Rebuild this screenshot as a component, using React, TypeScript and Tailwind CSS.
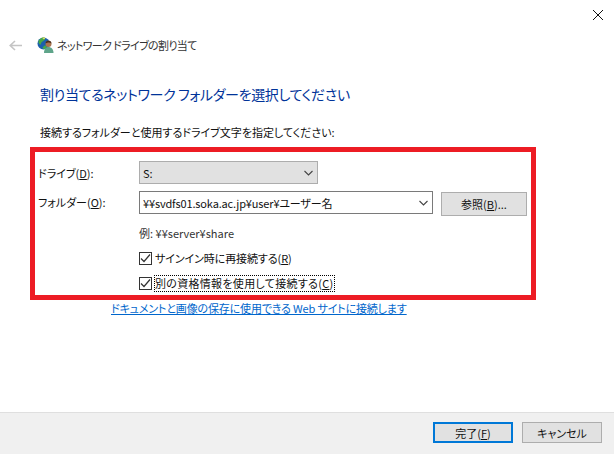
import React from "react";

const Chevron = () => (
  <svg width="9" height="6" viewBox="0 0 9 6" fill="none" stroke="#444" strokeWidth="1.1">
    <path d="M0.5 1l4 4 4-4" />
  </svg>
);

const Check = () => (
  <span className="w-[13px] h-[13px] border border-[#333] bg-white flex items-center justify-center shrink-0">
    <svg width="11" height="11" viewBox="0 0 11 11" fill="none" stroke="#333" strokeWidth="1.2">
      <path d="M1 5.5l3 3 6-7" />
    </svg>
  </span>
);

export default function App() {
  return (
    <div className="w-[614px] h-[454px] bg-white flex flex-col overflow-hidden text-[11px] leading-[16px] text-[#111] font-['Noto_Sans_CJK_JP','Noto_Sans',sans-serif] [font-feature-settings:'palt']">
      <div className="h-[30px] flex items-start justify-end pt-[10px] pr-[11px] shrink-0">
        <svg width="10" height="10" viewBox="0 0 10 10" stroke="#111" strokeWidth="1">
          <path d="M0 0l10 10M10 0L0 10" />
        </svg>
      </div>

      <div className="h-[30px] flex items-center pl-[9px] shrink-0">
        <svg width="13" height="11" viewBox="0 0 13 11" fill="none" stroke="#c4c4c4" strokeWidth="1.6">
          <path d="M6 1L1.2 5.5 6 10M1.2 5.5H13" />
        </svg>
        <svg className="ml-[15px]" width="17" height="18" viewBox="0 0 17 18">
          <circle cx="6.500" cy="7.500" r="6" fill="#1c5fae" />
          <path d="M2 4c2-2 4-3.500 5.500-2.500S7.500 4.500 5.500 5.500 4.500 9 3 8.500 1 5 2 4zM7 10c2-1 3 0 2.500 1.500S7 13.500 6 12.500 6 11 7 10z" fill="#45a848" />
          <path d="M5 1.800c1-.3 2.500-.3 3.500.2L7 3.500z" fill="#e8e070" />
          <circle cx="11.500" cy="8" r="3" fill="#a9744f" />
          <path d="M8.500 7.500c0-2 1.500-3 3-3s3 1 3 3c-1-1-2.500-1.300-3.500-1s-2 .5-2.500 1z" fill="#4a2f1c" />
          <path d="M7 17c0-4 2-6 4.500-6s5 2 5 6z" fill="#5fa58a" />
        </svg>
        <span className="ml-[3px] text-[#333] tracking-[-0.65px]">ネットワーク ドライブの割り当て</span>
      </div>

      <div className="pl-[40px] mt-[23px] text-[14px] leading-[22px] tracking-[-0.35px] text-[#003399] shrink-0">
        割り当てるネットワーク フォルダーを選択してください
      </div>

      <div className="pl-[40px] mt-[19px] shrink-0">接続するフォルダーと使用するドライブ文字を指定してください:</div>

      <div className="ml-[30px] mt-[7px] w-[506px] h-[153px] border-[5px] border-[#ed1c24] shrink-0 pt-[9px] pl-[3px]">
        <div className="flex items-center h-[23px]">
          <span className="w-[101px]">ドライブ(<u>D</u>):</span>
          <div className="w-[179px] h-[23px] border border-[#adadad] bg-[#e1e1e1] flex items-center justify-between pl-[3px] pr-[4px]">
            <span>S:</span>
            <Chevron />
          </div>
        </div>

        <div className="flex items-center h-[25px] mt-[7px]">
          <span className="w-[101px] self-start pt-[3px]">フォルダー(<u>O</u>):</span>
          <div className="w-[294px] h-[23px] self-start border border-[#7a7a7a] bg-white flex items-center justify-between pl-[3px] pr-[4px]">
            <span className="tracking-[-0.15px]">¥¥svdfs01.soka.ac.jp¥user¥ユーザー名</span>
            <Chevron />
          </div>
          <div className="ml-[8px] w-[86px] h-[24px] self-end border border-[#adadad] bg-[#e1e1e1] flex items-center justify-center">
            参照(<u>B</u>)...
          </div>
        </div>

        <div className="ml-[101px] mt-[9px] text-[#333]">例: ¥¥server¥share</div>

        <div className="ml-[101px] mt-[9px] flex items-center gap-[3px] h-[16px]">
          <Check />
          <span className="tracking-[-0.1px]">サインイン時に再接続する(<u>R</u>)</span>
        </div>

        <div className="ml-[101px] mt-[9px] flex items-center gap-[2px] h-[17px]">
          <Check />
          <span className="border border-dotted border-black leading-[15px] tracking-[0.3px]">別の資格情報を使用して接続する(<u>C</u>)</span>
        </div>
      </div>

      <div className="pl-[111px] shrink-0 text-[#0066cc] tracking-[-0.15px]">
        <u>ドキュメントと画像の保存に使用できる Web サイトに接続します</u>
      </div>

      <div className="flex-1" />

      <div className="h-[42px] shrink-0 bg-[#f0f0f0] border-t border-[#dfdfdf] flex items-start justify-end pt-[9px] pr-[12px] gap-[9px]">
        <div className="w-[80px] h-[21px] border-2 border-[#0078d7] bg-[#e1e1e1] flex items-center justify-center">
          完了(<u>F</u>)
        </div>
        <div className="w-[80px] h-[21px] border border-[#adadad] bg-[#e1e1e1] flex items-center justify-center">
          キャンセル
        </div>
      </div>
    </div>
  );
}
